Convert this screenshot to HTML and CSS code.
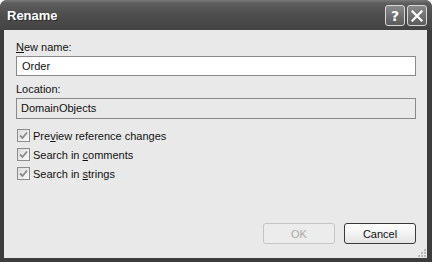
FILE: index.html
```html
<!DOCTYPE html>
<html lang="en">

<head>
    <meta charset="UTF-8">
    <title>Rename</title>
    <link rel="stylesheet" href="styles.css">
</head>

<body>

    <div class="window">
        <div class="titlebar">
            <span class="title">Rename</span>
            <div class="caption-buttons">
                <button class="caption-btn help">?</button>
                <button class="caption-btn close">
                    <svg width="12" height="12" viewBox="0 0 12 12">
                        <path d="M1.5 1.5 L10.5 10.5 M10.5 1.5 L1.5 10.5" stroke="#fff" stroke-width="2.2" stroke-linecap="square" fill="none"/>
                    </svg>
                </button>
            </div>
        </div>

        <div class="client">
            <label class="field-label"><u>N</u>ew name:</label>
            <div class="textbox">Order</div>

            <label class="field-label location">Location:</label>
            <div class="textbox readonly">DomainObjects</div>

            <div class="options">
                <div class="check-row">
                    <span class="checkbox"><svg width="9" height="9" viewBox="0 0 9 9"><path d="M1 4.5 L3.5 7 L8 1.5" stroke="#8a8a8a" stroke-width="1.8" fill="none"/></svg></span>
                    <span>Pre<u>v</u>iew reference changes</span>
                </div>
                <div class="check-row">
                    <span class="checkbox"><svg width="9" height="9" viewBox="0 0 9 9"><path d="M1 4.5 L3.5 7 L8 1.5" stroke="#8a8a8a" stroke-width="1.8" fill="none"/></svg></span>
                    <span>Search in <u>c</u>omments</span>
                </div>
                <div class="check-row">
                    <span class="checkbox"><svg width="9" height="9" viewBox="0 0 9 9"><path d="M1 4.5 L3.5 7 L8 1.5" stroke="#8a8a8a" stroke-width="1.8" fill="none"/></svg></span>
                    <span>Search in <u>s</u>trings</span>
                </div>
            </div>

            <div class="button-row">
                <button class="push-btn" disabled>OK</button>
                <button class="push-btn default">Cancel</button>
            </div>

            <svg class="gripper" width="8" height="8" viewBox="0 0 8 8">
                <rect x="6" y="0" width="2" height="2" fill="#b8b8b8"/>
                <rect x="3" y="3" width="2" height="2" fill="#b8b8b8"/>
                <rect x="6" y="3" width="2" height="2" fill="#b8b8b8"/>
                <rect x="0" y="6" width="2" height="2" fill="#b8b8b8"/>
                <rect x="3" y="6" width="2" height="2" fill="#b8b8b8"/>
                <rect x="6" y="6" width="2" height="2" fill="#b8b8b8"/>
            </svg>
        </div>
    </div>

</body>

</html>
```

FILE: styles.css
```css
* {
    box-sizing: border-box;
}

body {
    margin: 0;
    background-color: #ffffff;
    font-family: "Liberation Sans", Arial, sans-serif;
    font-size: 11px;
}

.window {
    width: 432px;
    height: 262px;
    background-color: #3c3c3c;
    border-radius: 7px 7px 0 0;
    display: flex;
    flex-direction: column;
}

.titlebar {
    height: 30px;
    flex-shrink: 0;
    display: flex;
    align-items: center;
    justify-content: space-between;
    padding: 0 5px 0 7px;
    border-radius: 7px 7px 0 0;
    background: linear-gradient(#7a7a7a 0px, #5e5e5e 3px, #4e4e4e 14px, #444444 30px);
}

.title {
    color: #ffffff;
    font-weight: bold;
    font-size: 13px;
    margin-top: 1px;
    text-shadow: 1px 1px 0 #2a2a2a;
}

.caption-buttons {
    display: flex;
    gap: 2px;
    margin-top: 1px;
}

.caption-btn {
    width: 20px;
    height: 21px;
    padding: 0;
    border: 1px solid #d8d8d8;
    border-radius: 3px;
    background: linear-gradient(#8a8a8a, #5a5a5a);
    color: #ffffff;
    display: flex;
    align-items: center;
    justify-content: center;
}

.help {
    font-family: "DejaVu Sans", sans-serif;
    font-weight: bold;
    font-size: 14px;
}

.client {
    position: relative;
    flex: 1;
    margin: 0 5px 4px 4px;
    background-color: #e9e9e9;
    padding: 10px 11px 14px 12px;
    display: flex;
    flex-direction: column;
    color: #111111;
}

.field-label {
    line-height: 14px;
    height: 14px;
}

.location {
    margin-top: 6px;
}

.textbox {
    margin-top: 2px;
    height: 20px;
    border: 1px solid #8a8a8a;
    background-color: #ffffff;
    padding: 0 5px;
    line-height: 18px;
}

.textbox.readonly {
    height: 21px;
    background-color: #e9e9e9;
    line-height: 19px;
    padding-left: 4px;
}

.options {
    margin-top: 7px;
}

.check-row {
    height: 19px;
    display: flex;
    align-items: center;
    padding-left: 1px;
}

.checkbox {
    width: 13px;
    height: 13px;
    border: 1px solid #8c8c8c;
    background: linear-gradient(135deg, #dcdcdc, #fafafa);
    margin-right: 3px;
    display: flex;
    align-items: center;
    justify-content: center;
}

.button-row {
    margin-top: auto;
    display: flex;
    justify-content: flex-end;
    gap: 9px;
}

.push-btn {
    width: 72px;
    height: 21px;
    padding: 0;
    font-family: "Liberation Sans", Arial, sans-serif;
    font-size: 11px;
    border-radius: 3px;
    border: 1px solid #3a3a3a;
    background: linear-gradient(#ffffff, #f2f2f2 50%, #e4e4e4);
    color: #111111;
}

.push-btn:disabled {
    border-color: #c4c4c4;
    background: #ececec;
    color: #a8a8a8;
}

.gripper {
    position: absolute;
    right: 1px;
    bottom: 1px;
}
```
